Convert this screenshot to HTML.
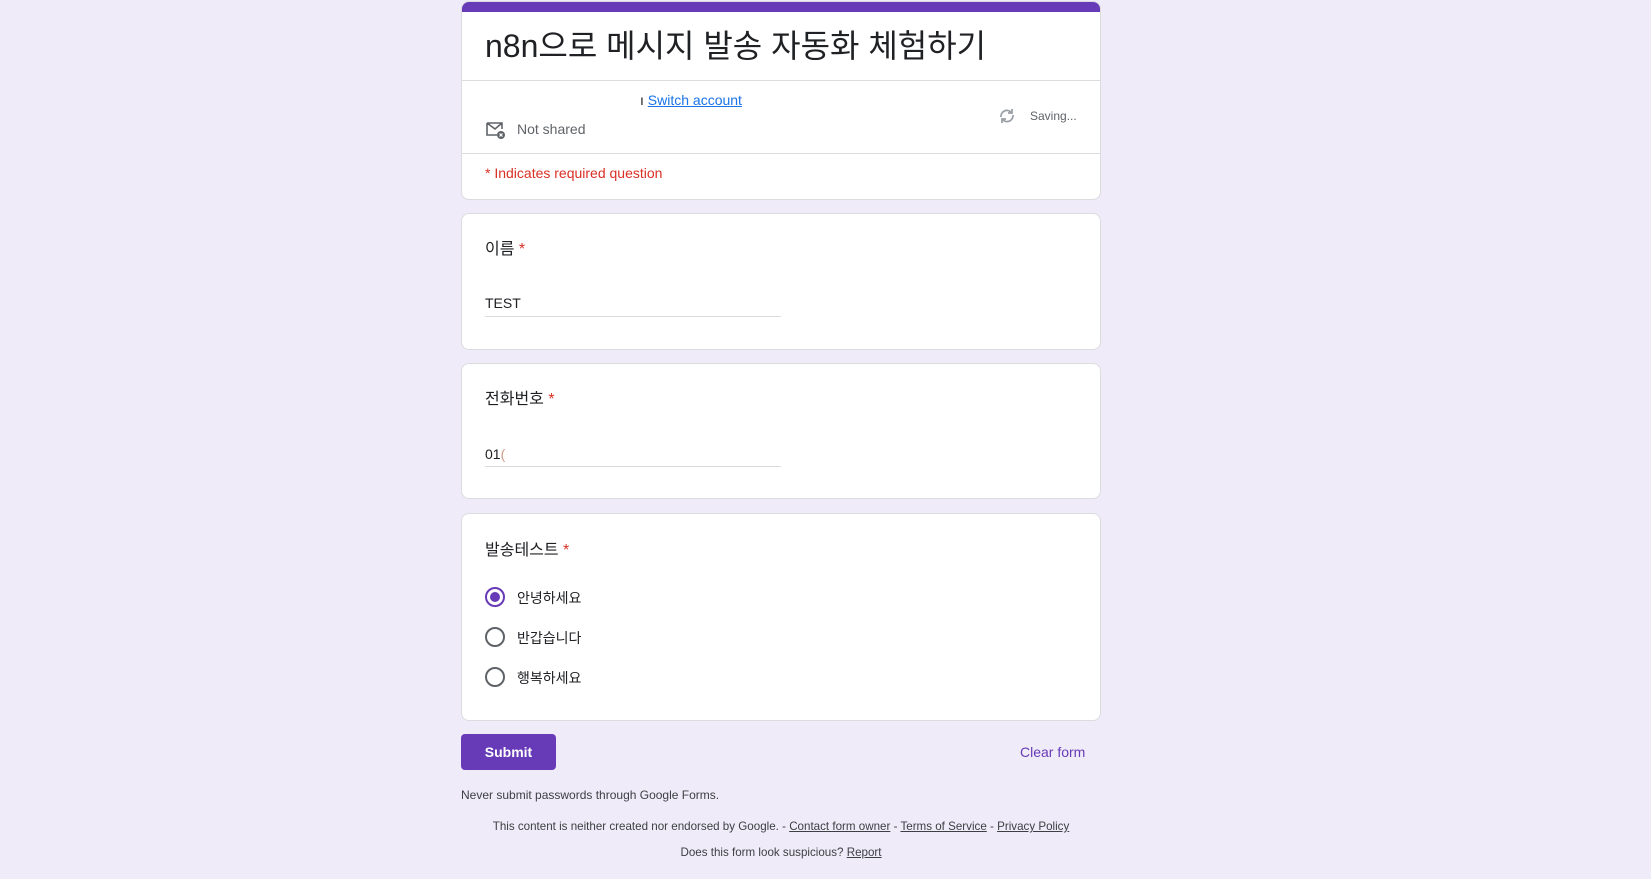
<!DOCTYPE html>
<html><head><meta charset="utf-8"><style>
*{box-sizing:border-box;margin:0;padding:0}
body{width:1651px;height:879px;background:#f0ebf8;font-family:"Liberation Sans","Noto Sans CJK KR",sans-serif;color:#202124;position:relative;overflow:hidden}
.card{position:absolute;left:461px;width:640px;background:#fff;border:1px solid #dadce0;border-radius:8px}
.abs{position:absolute;white-space:nowrap}
.q{font-size:16px;left:23px}
.q .r{color:#d93025}
.line{position:absolute;left:23px;width:296px;border-bottom:1px solid #dadce0}
.radio{position:absolute;left:23px;width:20px;height:20px;border:2px solid #5f6368;border-radius:50%}
.radio.on{border-color:#673ab7}
.radio.on:after{content:"";position:absolute;left:3px;top:3px;width:10px;height:10px;border-radius:50%;background:#673ab7}
.rl{left:55px;font-size:14px}
.u{text-decoration:underline}
</style></head><body>
<div class="card" style="top:1px;height:199px;overflow:hidden">
  <div style="position:absolute;left:0;top:0;right:0;height:10px;background:#673ab7"></div>
  <div class="abs" style="left:23px;top:24px;font-size:32px;line-height:40px">n8n으로 메시지 발송 자동화 체험하기</div>
  <div style="position:absolute;left:0;right:0;top:78px;border-top:1px solid #dadce0"></div>
  <div class="abs" style="left:178px;top:90px;font-size:14px;color:#202124">ı <span style="color:#1a73e8" class="u">Switch account</span></div>
  <svg class="abs" style="left:23px;top:118px" width="22" height="20" viewBox="0 0 22 20"><path d="M2 3h15v6M2 3v12h10M2 3l8 6 7-6" fill="none" stroke="#5f6368" stroke-width="1.6"/><circle cx="16" cy="15" r="4" fill="#5f6368"/><path d="M14.5 13.5l3 3M17.5 13.5l-3 3" stroke="#fff" stroke-width="1.2"/></svg>
  <div class="abs" style="left:55px;top:119px;font-size:14px;color:#5f6368">Not shared</div>
  <svg class="abs" style="left:535px;top:104px" width="20" height="20" viewBox="0 0 20 20"><path d="M4 11a6 6 0 0 1 10-5l1 1M16 9a6 6 0 0 1-10 5l-1-1" fill="none" stroke="#9aa0a6" stroke-width="1.8"/><path d="M15 3v4h-4M5 17v-4h4" fill="none" stroke="#9aa0a6" stroke-width="1.8"/></svg>
  <div class="abs" style="left:568px;top:107px;font-size:12px;color:#5f6368">Saving...</div>
  <div style="position:absolute;left:0;right:0;top:151px;border-top:1px solid #dadce0"></div>
  <div class="abs" style="left:23px;top:163px;font-size:14px;color:#d93025">* Indicates required question</div>
</div>
<div class="card" style="top:213px;height:137px">
  <div class="abs q" style="top:21px">이름 <span class="r">*</span></div>
  <div class="abs" style="left:23px;top:81px;font-size:14px">TEST</div>
  <div class="line" style="top:102px"></div>
</div>
<div class="card" style="top:363px;height:136px">
  <div class="abs q" style="top:21px">전화번호 <span class="r">*</span></div>
  <div class="abs" style="left:23px;top:82px;font-size:14px">01<span style="color:#c98">(</span></div>
  <div class="line" style="top:102px"></div>
</div>
<div class="card" style="top:513px;height:208px">
  <div class="abs q" style="top:22px">발송테스트 <span class="r">*</span></div>
  <div class="radio on" style="top:73px"></div><div class="abs rl" style="top:74px">안녕하세요</div>
  <div class="radio" style="top:113px"></div><div class="abs rl" style="top:114px">반갑습니다</div>
  <div class="radio" style="top:153px"></div><div class="abs rl" style="top:154px">행복하세요</div>
</div>
<div class="abs" style="left:461px;top:734px;width:95px;height:36px;background:#673ab7;border-radius:4px;color:#fff;font-size:14px;font-weight:bold;text-align:center;line-height:36px">Submit</div>
<div class="abs" style="left:1020px;top:744px;font-size:14px;color:#673ab7">Clear form</div>
<div class="abs" style="left:461px;top:788px;font-size:12px;color:#3c4043">Never submit passwords through Google Forms.</div>
<div class="abs" style="left:461px;width:640px;text-align:center;top:820px;font-size:11.6px;color:#3c4043">This content is neither created nor endorsed by Google. - <span class="u">Contact form owner</span> - <span class="u">Terms of Service</span> - <span class="u">Privacy Policy</span></div>
<div class="abs" style="left:461px;width:640px;text-align:center;top:846px;font-size:11.6px;color:#3c4043">Does this form look suspicious? <span class="u">Report</span></div>
</body></html>
